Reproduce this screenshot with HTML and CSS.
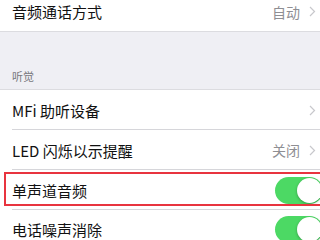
FILE: index.html
```html
<!DOCTYPE html>
<html lang="zh">
<head>
<meta charset="utf-8">
<link rel="stylesheet" href="styles.css">
</head>
<body>
<div class="group first">
  <div class="row">
    <span class="label">音频通话方式</span>
    <span class="value">自动</span>
    <svg class="chev" width="7" height="11" viewBox="0 0 7 11"><path d="M1 1 L5.5 5.5 L1 10" fill="none" stroke="#c8c8cc" stroke-width="1.2"/></svg>
  </div>
</div>
<div class="section">
  <div class="section-title">听觉</div>
</div>
<div class="group">
  <div class="row sep">
    <span class="label">MFi 助听设备</span>
    <svg class="chev" width="7" height="11" viewBox="0 0 7 11"><path d="M1 1 L5.5 5.5 L1 10" fill="none" stroke="#c8c8cc" stroke-width="1.2"/></svg>
  </div>
  <div class="row sep">
    <span class="label">LED 闪烁以示提醒</span>
    <span class="value">关闭</span>
    <svg class="chev" width="7" height="11" viewBox="0 0 7 11"><path d="M1 1 L5.5 5.5 L1 10" fill="none" stroke="#c8c8cc" stroke-width="1.2"/></svg>
  </div>
  <div class="row sep highlight">
    <span class="label">单声道音频</span>
    <span class="toggle"><span class="knob"></span></span>
    <span class="redbox"></span>
  </div>
  <div class="row">
    <span class="label">电话噪声消除</span>
    <span class="toggle"><span class="knob"></span></span>
  </div>
</div>
</body>
</html>
```
FILE: styles.css
```css
html, body {
  margin: 0;
  padding: 0;
  background: #efeff4;
  font-family: "Noto Sans CJK SC", "Noto Sans", sans-serif;
  overflow: hidden;
  width: 320px;
  height: 240px;
}
.group {
  background: #fff;
}
.first {
  margin-top: -8px;
  border-bottom: 1px solid #dcdce0;
}
.row {
  position: relative;
  display: flex;
  align-items: center;
  height: 39px;
  padding-left: 12px;
  padding-right: 3px;
  background: #fff;
}
.row.sep::after {
  content: "";
  position: absolute;
  left: 12px;
  right: 0;
  bottom: 0;
  height: 1px;
  background: #d6d6da;
}
.row.sep {
  height: 40px;
}
.label {
  flex: 1;
  font-size: 15px;
  color: #111;
  line-height: 1;
}
.value {
  font-size: 14px;
  color: #8e8e93;
  margin-right: 9px;
  line-height: 1;
}
.chev {
  display: block;
  margin-right: 1px;
}
.section {
  height: 58px;
  display: flex;
  align-items: flex-end;
  padding-left: 12px;
  padding-bottom: 7px;
  box-sizing: border-box;
  border-bottom: 1px solid #dcdce0;
}
.section-title {
  font-size: 11px;
  color: #77777c;
  line-height: 1;
}
.toggle {
  position: relative;
  width: 48px;
  height: 27px;
  border-radius: 14px;
  background: #4cd964;
  margin-right: -6px;
  flex: none;
}
.knob {
  position: absolute;
  top: 1px;
  right: 1px;
  width: 25px;
  height: 25px;
  border-radius: 50%;
  background: #fff;
  box-shadow: 0 1px 3px rgba(0,0,0,0.3);
}
.redbox {
  position: absolute;
  left: 4px;
  right: -6px;
  top: 2px;
  bottom: 4px;
  border: 2px solid #e8343f;
}
```
